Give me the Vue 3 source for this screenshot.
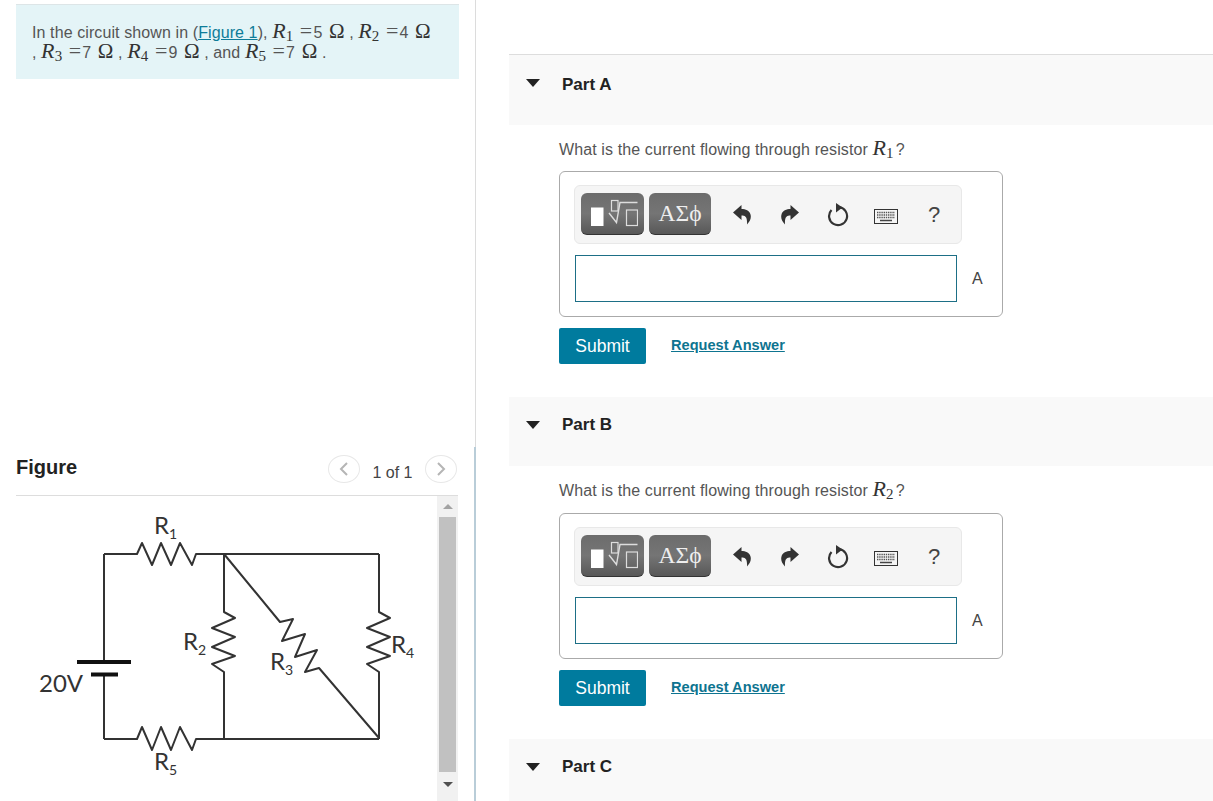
<script setup>
const parts = [
  { name: 'A', sub: '1', open: true },
  { name: 'B', sub: '2', open: true },
  { name: 'C', open: false },
]
const zig = {
  r1: '104,554 137,554 142,543 152,565 161,543 171,565 180,543 192,565 196,554 379,554',
  r2: '224,554 224,612 235,618 212,628 235,637 212,647 235,656 212,664 224,672 224,739',
  r3: '224,554 280,622 293,619 282,641 305,634 295,657 317,650 305,672 319,668 379,738',
  r4: '379,554 379,612 390,618 367,628 390,637 367,647 390,656 367,664 379,672 379,739',
  r5: '104,739 137,739 142,727 152,750 161,727 171,750 180,727 192,750 196,739 379,739',
}
</script>

<template>
  <div class="page">
    <div class="left">
      <div class="intro">
        <p>
          In the circuit shown in (<a href="#">Figure 1</a>),
          <span class="mi">R<sub>1</sub></span> <span class="eq">=</span>5 <span class="om">Ω</span> ,
          <span class="mi">R<sub>2</sub></span> <span class="eq">=</span>4 <span class="om">Ω</span><br>
          , <span class="mi">R<sub>3</sub></span> <span class="eq">=</span>7 <span class="om">Ω</span> ,
          <span class="mi">R<sub>4</sub></span> <span class="eq">=</span>9 <span class="om">Ω</span> , and
          <span class="mi">R<sub>5</sub></span> <span class="eq">=</span>7 <span class="om">Ω</span> .
        </p>
      </div>

      <div class="figure">
        <div class="figure-head">
          <h2>Figure</h2>
          <div class="pager">
            <span class="round">
              <svg width="10" height="16" viewBox="0 0 10 16"><path d="M8 2 2 8l6 6" fill="none" stroke="#b5b5b5" stroke-width="2" /></svg>
            </span>
            <span class="count">1 of 1</span>
            <span class="round">
              <svg width="10" height="16" viewBox="0 0 10 16"><path d="m2 2 6 6-6 6" fill="none" stroke="#b5b5b5" stroke-width="2" /></svg>
            </span>
          </div>
        </div>
        <div class="figure-body">
          <svg class="circuit" width="421" height="305" viewBox="16 496 421 305">
            <g fill="none" stroke="#333" stroke-width="2" stroke-linejoin="round">
              <polyline :points="zig.r1" />
              <polyline :points="zig.r2" />
              <polyline :points="zig.r3" />
              <polyline :points="zig.r4" />
              <polyline :points="zig.r5" />
              <path d="M104 554V662M104 675V739" />
            </g>
            <path d="M77 662H131M91 674.5H118" stroke="#111" stroke-width="4" />
            <g class="label">
              <text x="154" y="534">R<tspan class="ix" dy="5">1</tspan></text>
              <text x="183" y="650">R<tspan class="ix" dy="5">2</tspan></text>
              <text x="270" y="670">R<tspan class="ix" dy="5">3</tspan></text>
              <text x="391" y="653">R<tspan class="ix" dy="5">4</tspan></text>
              <text x="154" y="770">R<tspan class="ix" dy="5">5</tspan></text>
              <text x="39" y="692">20V</text>
            </g>
          </svg>
          <div class="scrollbar">
            <span class="arrow up"></span>
            <span class="thumb"></span>
            <span class="arrow down"></span>
          </div>
        </div>
      </div>
    </div>

    <div class="right">
      <section v-for="part in parts" :key="part.name" class="part">
        <div class="part-head">
          <span class="caret"></span>
          <h3>Part {{ part.name }}</h3>
        </div>
        <div v-if="part.open" class="part-body">
          <p class="question">
            What is the current flowing through resistor <span class="mi">R<sub>{{ part.sub }}</sub></span>?
          </p>
          <div class="answer">
            <div class="toolbar">
              <button class="tool">
                <svg width="50" height="32" viewBox="0 0 50 32">
                  <rect x="3" y="9.500" width="12.500" height="18.500" fill="#fff" />
                  <rect x="23.500" y="2.500" width="6.500" height="10.500" fill="none" stroke="#ddd" stroke-width="1.200" />
                  <path d="M21 15l7.500 9.500 3.500-20h17.500" fill="none" stroke="#ddd" stroke-width="1.400" />
                  <rect x="38.500" y="12" width="11" height="15.500" fill="none" stroke="#ddd" stroke-width="1.200" />
                </svg>
              </button>
              <button class="tool greek">ΑΣϕ</button>
              <span class="slot">
                <svg width="18" height="20" viewBox="0 0 18 20"><path d="M8.500 0 0 7.500 8.500 15v-4.500c3.500 0 6 1 5.500 9 3-3.500 4.500-6.500 3.500-10-1-4-5-5.500-9-5.500z" fill="#333" /></svg>
              </span>
              <span class="slot">
                <svg width="18" height="20" viewBox="0 0 18 20"><path d="M9.500 0 18 7.500 9.500 15v-4.500c-3.500 0-6 1-5.500 9-3-3.500-4.500-6.500-3.500-10 1-4 5-5.500 9-5.500z" fill="#333" /></svg>
              </span>
              <span class="slot">
                <svg width="22" height="24" viewBox="0 0 22 24">
                  <path d="M12 4.200A9 9 0 1 1 4.500 7" fill="none" stroke="#333" stroke-width="2.200" />
                  <path d="m9 0 6.500 4.500L9 9.500z" fill="#333" />
                </svg>
              </span>
              <span class="slot kbd">
                <svg width="24" height="15" viewBox="0 0 24 15">
                  <rect x=".5" y=".5" width="23" height="14" fill="#f5f5f5" stroke="#333" />
                  <path d="M3 3.500h18M3 6h18M3 8.500h18" stroke="#555" stroke-width="1.300" stroke-dasharray="1.400 .8" />
                  <path d="M6 11.500h12" stroke="#444" stroke-width="1.500" />
                </svg>
              </span>
              <span class="slot help">?</span>
            </div>
            <div class="answer-row">
              <input type="text" aria-label="answer">
              <span class="unit">A</span>
            </div>
          </div>
          <div class="actions">
            <button class="submit">Submit</button>
            <a class="request" href="#">Request Answer</a>
          </div>
        </div>
      </section>
    </div>
  </div>
</template>

<style scoped>
.page {
  display: flex;
  width: 1213px;
  height: 801px;
  overflow: hidden;
  font-family: "Liberation Sans", Arial, sans-serif;
  color: #555;
  background: #fff;
}

.left {
  width: 476px;
  flex: none;
  box-sizing: border-box;
  padding-top: 4px;
  border-right: 1px solid #dcdcdc;
  position: relative;
}

/* the lower part of the divider is blue */
.left::after {
  content: "";
  position: absolute;
  top: 447px;
  right: -1px;
  bottom: 0;
  width: 2px;
  background: #b9cdd8;
}

.intro {
  width: 443px;
  height: 75px;
  margin-left: 16px;
  box-sizing: border-box;
  padding: 18px 16px 0;
  background: #e4f4f7;
  border-top: 1px solid #dde5e7;
}

.intro p {
  margin: 0;
  font-size: 16px;
  line-height: 20px;
  letter-spacing: 0.1px;
  white-space: nowrap;
}

.intro a {
  color: #0e7c99;
}

.mi {
  margin-right: 2px;
  font-family: "Liberation Serif", serif;
  font-style: italic;
  font-size: 22px;
  color: #333;
  line-height: 0;
}

.mi sub {
  font-style: normal;
  font-size: 15px;
  line-height: 0;
  vertical-align: -3px;
}

.eq {
  margin-right: 1px;
  font-family: "Liberation Serif", serif;
  font-size: 22px;
  line-height: 0;
}

.om {
  margin-left: 2px;
  font-family: "Liberation Serif", serif;
  font-size: 21px;
  line-height: 0;
  color: #333;
}

.figure {
  width: 442px;
  margin: 372px 0 0 16px;
}

.figure-head {
  display: flex;
  justify-content: space-between;
  height: 44px;
  border-bottom: 1px solid #ddd;
}

.figure-head h2 {
  margin: 0;
  padding-top: 4px;
  font-size: 20px;
  line-height: 24px;
  color: #222;
}

.pager {
  display: flex;
  align-items: flex-start;
  padding: 4px 1px 0 0;
}

.round {
  display: flex;
  align-items: center;
  justify-content: center;
  width: 32px;
  height: 28px;
  border: 1px solid #e8e8e8;
  border-radius: 50%;
  box-sizing: border-box;
}

.count {
  width: 65px;
  text-align: center;
  font-size: 16px;
  line-height: 36px;
  color: #444;
}

.figure-body {
  display: flex;
  height: 305px;
}

.circuit {
  flex: none;
}

.label text {
  font-family: Lato, "Open Sans", sans-serif;
  font-size: 24px;
  fill: #333;
}

.label .ix {
  font-size: 14px;
}

.scrollbar {
  display: flex;
  flex-direction: column;
  align-items: center;
  width: 21px;
  background: #f1f1f1;
}

.thumb {
  width: 17px;
  height: 255px;
  background: #c1c1c1;
}

.arrow {
  width: 0;
  height: 0;
  border-left: 5px solid transparent;
  border-right: 5px solid transparent;
}

.arrow.up {
  margin: 8px 0 8px;
  border-bottom: 5px solid #a3a3a3;
}

.arrow.down {
  margin-top: 10px;
  border-top: 5px solid #505050;
}

.right {
  flex: 1;
  padding: 54px 0 0 33px;
}

.part-head {
  display: flex;
  height: 69px;
  box-sizing: border-box;
  padding: 18px 0 0 17px;
  background: #f9f9f9;
}

.part:first-child .part-head {
  height: 71px;
  padding-top: 20px;
  border-top: 1px solid #ddd;
}

.caret {
  width: 0;
  height: 0;
  margin: 6px 22px 0 0;
  border-left: 7px solid transparent;
  border-right: 7px solid transparent;
  border-top: 8px solid #222;
}

.part:first-child .caret {
  margin-top: 4px;
}

.part-head h3 {
  margin: 0;
  font-size: 17px;
  line-height: 20px;
  color: #222;
}

.part-body {
  padding: 13px 0 33px 50px;
}

.question {
  margin: 0 0 10px;
  font-size: 16px;
  line-height: 24px;
  letter-spacing: 0.11px;
  color: #555;
}

.part:first-child .question {
  margin-bottom: 9px;
}

.answer {
  width: 444px;
  height: 146px;
  box-sizing: border-box;
  padding: 13px 14px;
  border: 1px solid #aaa;
  border-radius: 6px;
}

.toolbar {
  display: flex;
  align-items: center;
  width: 388px;
  height: 59px;
  box-sizing: border-box;
  padding-left: 6px;
  gap: 5px;
  background: #f5f5f5;
  border: 1px solid #e8e8e8;
  border-radius: 6px;
}

.tool {
  display: flex;
  align-items: center;
  justify-content: center;
  width: 63px;
  height: 42px;
  margin-top: -1px;
  padding: 0;
  border: 0;
  border-bottom: 1px solid #333;
  border-radius: 6px;
  background: linear-gradient(#6c6c6c, #757575 50%, #585858);
  color: #eee;
}

.tool.greek {
  width: 62px;
  font-family: "Liberation Serif", serif;
  font-size: 23.500px;
}

.slot {
  display: flex;
  align-items: center;
  justify-content: center;
  width: 48px;
}

.slot:nth-child(3) {
  margin-left: 2px;
}

.slot + .slot {
  margin-left: -5px;
}

.kbd {
  margin-top: 4px;
}

.help {
  font-size: 22px;
  color: #444;
}

.answer-row {
  display: flex;
  margin-top: 11px;
  padding-left: 1px;
}

.answer-row input {
  width: 382px;
  height: 47px;
  box-sizing: border-box;
  border: 1px solid #1d6f86;
  outline: none;
}

.unit {
  margin-left: 15px;
  font-size: 16px;
  line-height: 47px;
  color: #444;
}

.actions {
  display: flex;
  align-items: center;
  margin-top: 11px;
}

.submit {
  width: 87px;
  height: 36px;
  padding: 0;
  border: 0;
  border-radius: 2px;
  background: #007b9e;
  color: #fff;
  font-family: inherit;
  font-size: 17.500px;
}

.request {
  margin: 0 0 2px 25px;
  font-size: 14.600px;
  font-weight: bold;
  color: #0e7490;
}
</style>

<style>
html, body {
  margin: 0;
  overflow: hidden;
}
</style>
